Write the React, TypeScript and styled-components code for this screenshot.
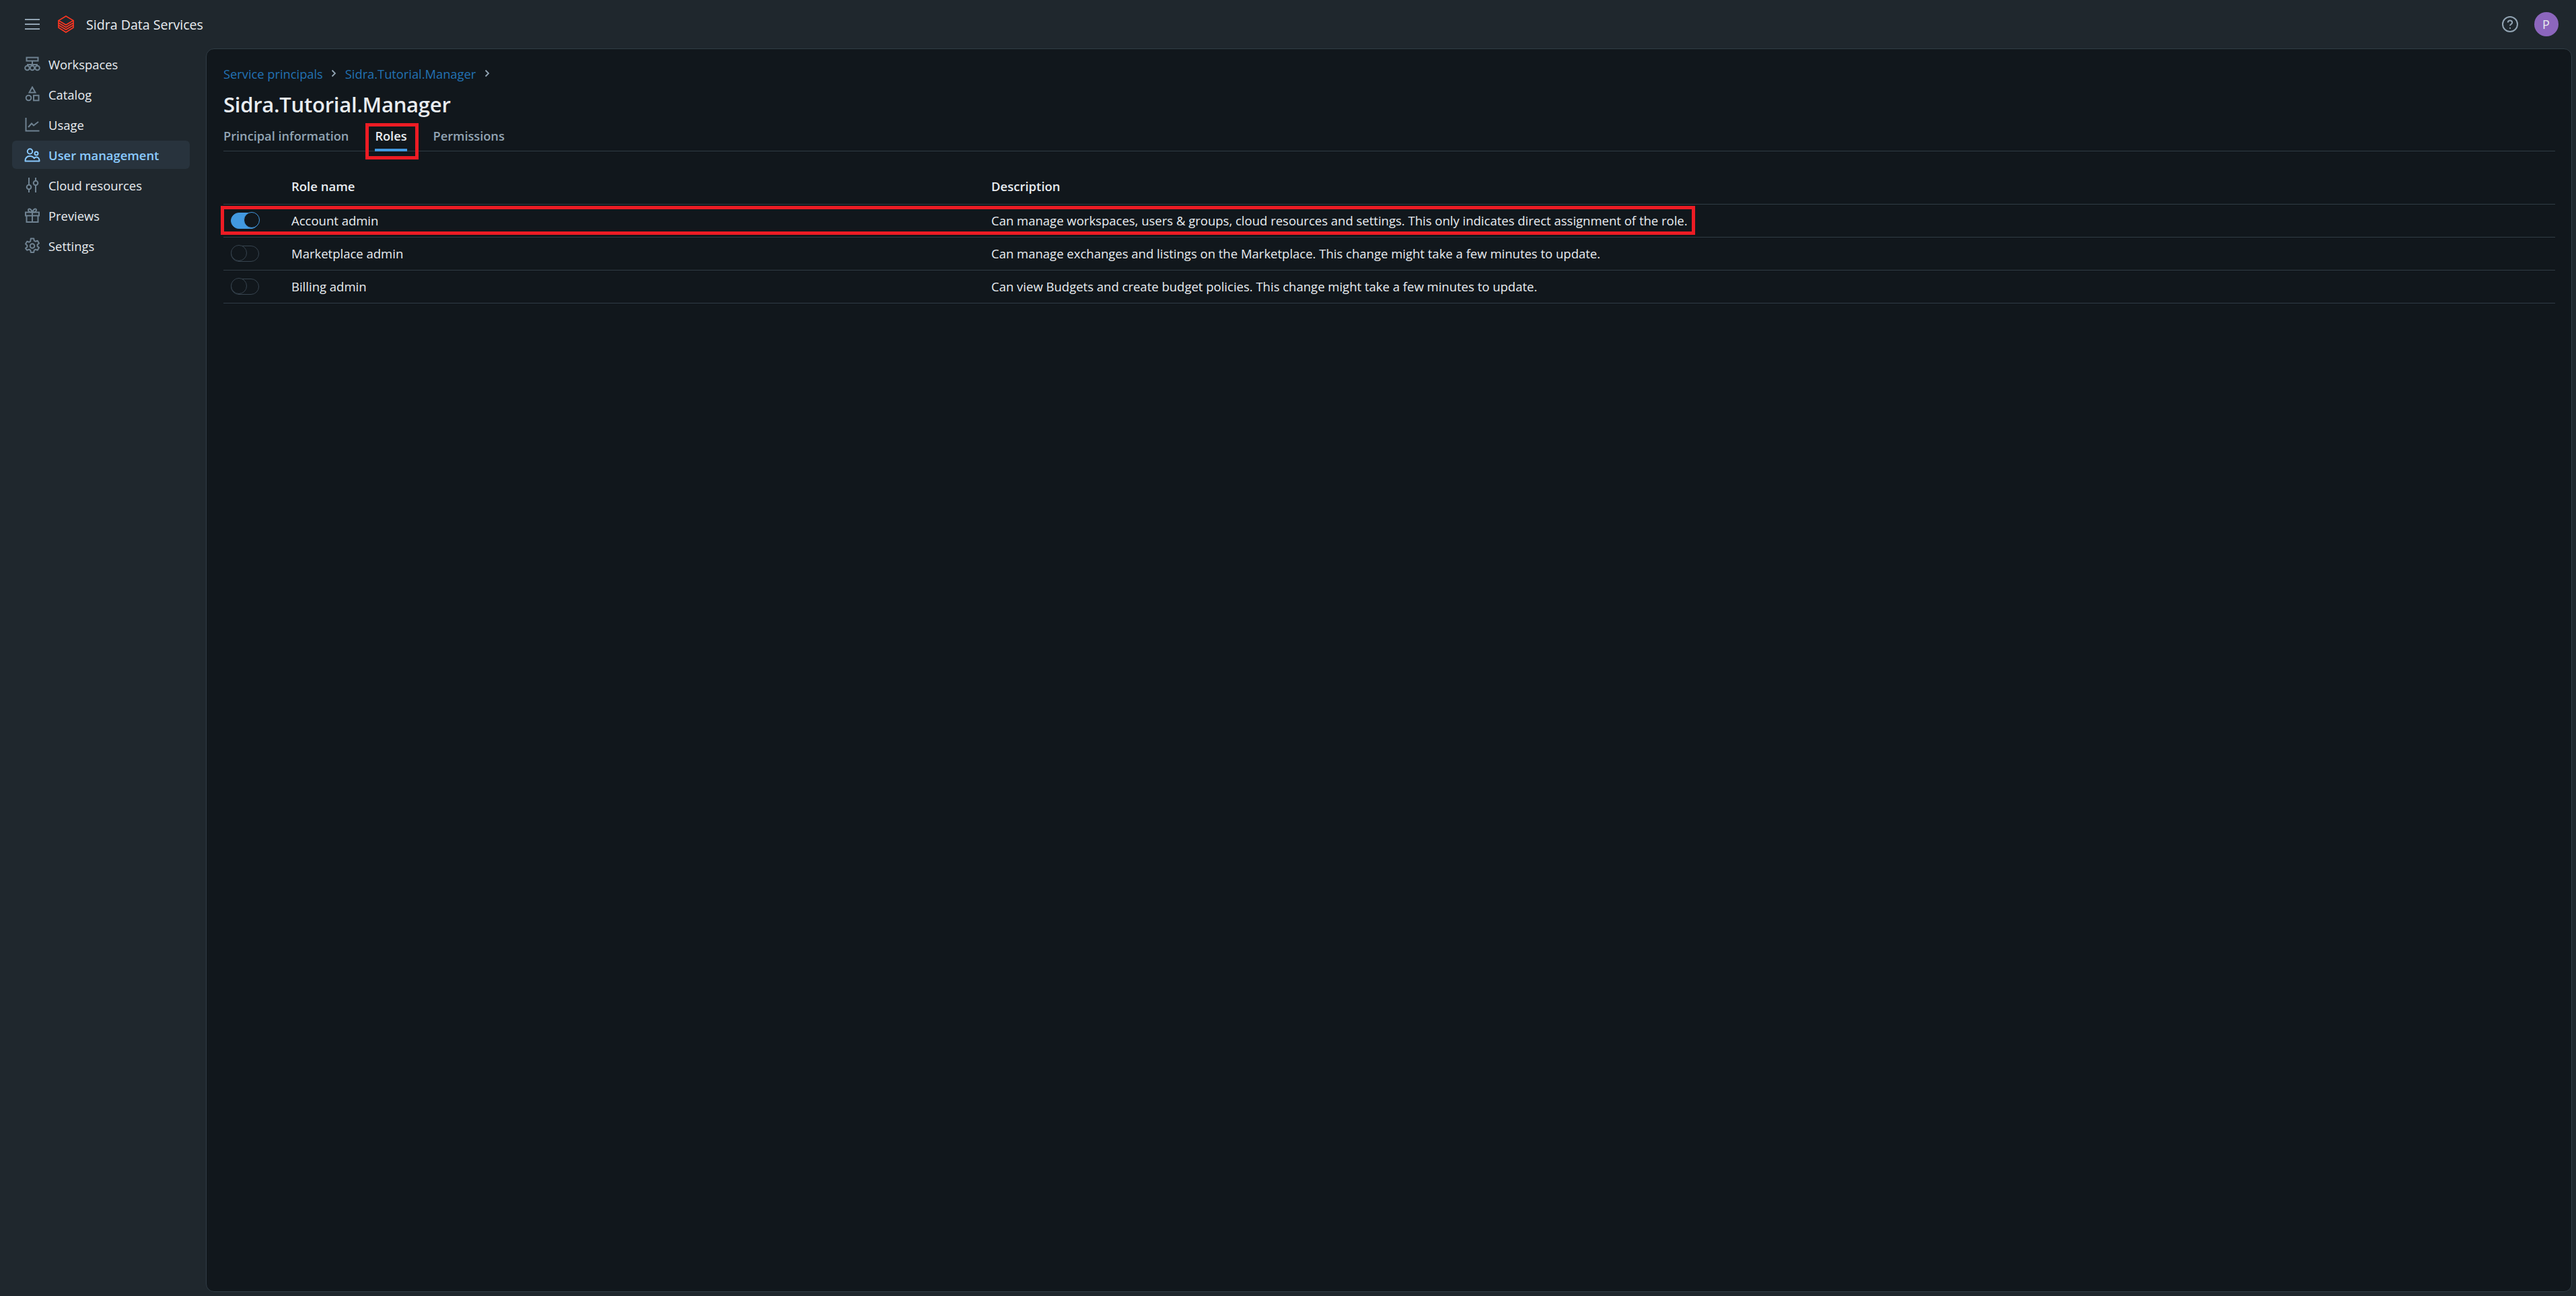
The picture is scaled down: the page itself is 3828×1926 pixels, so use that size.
import React from "react";
import styled, { createGlobalStyle } from "styled-components";

const Global = createGlobalStyle`
  html, body { margin: 0; padding: 0; background: #1f272d; }
  body { font-family: "Open Sans", "Noto Sans", sans-serif; font-size: 18.5px; color: #e8ecf0; }
  * { box-sizing: border-box; }
`;

const Shell = styled.div`
  width: 3828px;
  height: 1926px;
  display: grid;
  grid-template-columns: 306px 1fr;
  grid-template-rows: 72px 1fr;
  padding-right: 6.5px;
  padding-bottom: 6.5px;
  overflow: hidden;
`;

const TopBar = styled.header`
  grid-column: 1 / 3;
  display: flex;
  align-items: center;
  padding: 0 0 0 37px;
`;

const IconSlot = styled.span`
  display: inline-flex;
  align-items: center;
  justify-content: center;
  flex: none;
  color: #92a4b3;
`;

const Brand = styled.span`
  margin-left: 27px;
  display: inline-flex;
`;

const BrandName = styled.span`
  margin-left: 18px;
  font-size: 19.6px;
  color: #e8ecf0;
`;

const TopActions = styled.div`
  margin-left: auto;
  display: flex;
  align-items: center;
  gap: 24px;
  padding-right: 20px;
`;

const Avatar = styled.span`
  width: 36px;
  height: 36px;
  border-radius: 50%;
  background: #8c66bd;
  color: #e8ecf0;
  display: flex;
  align-items: center;
  justify-content: center;
  font-size: 18px;
`;

const Sidebar = styled.nav`
  display: flex;
  flex-direction: column;
  padding: 2px 0 0 18px;
  width: 282px;
`;

const NavItem = styled.a<{ $active?: boolean }>`
  height: 42px;
  margin-bottom: 3px;
  padding: 0 0 0 18px;
  display: flex;
  align-items: center;
  gap: 12px;
  border-radius: 6px;
  font-size: 18.4px;
  color: ${(p) => (p.$active ? "#8acaff" : "#e8ecf0")};
  background: ${(p) => (p.$active ? "#28333d" : "transparent")};
  font-weight: ${(p) => (p.$active ? 600 : 400)};
  & > span { color: ${(p) => (p.$active ? "#8acaff" : "#6f8291")}; }
`;

const Panel = styled.main`
  background: #11171c;
  border: 1.5px solid #303c45;
  border-radius: 12px;
  padding: 22px 24px 0 25px;
`;

const Crumbs = styled.div`
  display: flex;
  align-items: center;
  height: 28px;
  gap: 12.5px;
  font-size: 18.3px;
  color: #2272b4;
`;

const Chevron = styled.span`
  display: inline-flex;
  color: #92a4b3;
`;

const Title = styled.h1`
  margin: 9px 0 0;
  font-size: 31px;
  letter-spacing: -0.25px;
  line-height: 46px;
  font-weight: 600;
  color: #e8ecf0;
`;

const Tabs = styled.div`
  display: flex;
  gap: 39px;
  height: 44px;
  margin-top: 3px;
  border-bottom: 1.5px solid #303c45;
`;

const Tab = styled.div<{ $active?: boolean }>`
  position: relative;
  height: 44px;
  padding-top: 9px;
  font-size: 18.2px;
  font-weight: 600;
  color: ${(p) => (p.$active ? "#e8ecf0" : "#92a4b3")};
  border-bottom: 4px solid ${(p) => (p.$active ? "#4299e0" : "transparent")};
`;

const Callout = styled.span`
  position: absolute;
  border: 5px solid #ed1c24;
  pointer-events: none;
`;

const RolesCallout = styled(Callout)`
  left: -14px;
  right: -17px;
  top: 1.5px;
  bottom: -15.5px;
`;

const RowCallout = styled(Callout)`
  left: -4.5px;
  top: 2px;
  bottom: 3px;
  width: 2191px;
`;

const Table = styled.div`
  margin-top: 29.5px;
`;

const Row = styled.div<{ $head?: boolean }>`
  position: relative;
  display: grid;
  grid-template-columns: 101px 1040px 1fr;
  align-items: center;
  height: ${(p) => (p.$head ? "49.5px" : "49px")};
  border-bottom: 1.5px solid #303c45;
  font-weight: ${(p) => (p.$head ? 600 : 400)};
  padding-bottom: ${(p) => (p.$head ? "4px" : "1px")};
`;

const SwitchCell = styled.div`
  padding-left: 11px;
`;

const SwitchTrack = styled.span<{ $on?: boolean }>`
  position: relative;
  display: block;
  width: 42px;
  height: 24px;
  border-radius: 12px;
  background: ${(p) => (p.$on ? "#4299e0" : "transparent")};
  border: 1.5px solid ${(p) => (p.$on ? "#4299e0" : "#37444f")};
`;

const SwitchThumb = styled.span<{ $on?: boolean }>`
  position: absolute;
  top: -1.5px;
  ${(p) => (p.$on ? "right: -1.5px;" : "left: -1.5px;")}
  width: 24px;
  height: 24px;
  border-radius: 50%;
  background: #11171c;
  border: 1.5px solid ${(p) => (p.$on ? "#4299e0" : "#37444f")};
`;

const s = { fill: "none", stroke: "currentColor", strokeWidth: 2 };

const Menu = () => (
  <svg width="22" height="18" viewBox="0 0 22 18" {...s}>
    <path d="M0 2h22M0 9h22M0 16h22" />
  </svg>
);

const Logo = () => (
  <svg width="24" height="26" viewBox="0 0 24 26" fill="none" stroke="#ff3621" strokeWidth="1.6">
    <path d="M12 1 1 7.500 12 14l11-6.500z" />
    <path d="M1 7.500v3.500l11 6.500L23 11V7.500" />
    <path d="M1 11v3.500L12 21l11-6.500V11" />
    <path d="M1 14.500V18l11 7 11-7v-3.500" />
  </svg>
);

const Workspaces = () => (
  <svg width="24" height="24" viewBox="0 0 24 24" {...s}>
    <path d="M3.500 2.500h17v5h-17zM12 7.500v5.500M5 15.500v-2.500h14v2.500" />
    <circle cx="4.500" cy="18" r="3.300" />
    <circle cx="12" cy="18" r="3.300" />
    <circle cx="19.500" cy="18" r="3.300" />
  </svg>
);

const Catalog = () => (
  <svg width="24" height="24" viewBox="0 0 24 24" {...s}>
    <path d="M12 1.500l4.500 8h-9z" />
    <circle cx="6.500" cy="17.500" r="3.800" />
    <rect x="14" y="13.800" width="7.500" height="7.500" />
  </svg>
);

const Usage = () => (
  <svg width="24" height="24" viewBox="0 0 24 24" {...s}>
    <path d="M2.500 2v19.500h20" />
    <path d="M6 16l5-5.500 3 3 7-5.500" />
  </svg>
);

const Users = () => (
  <svg width="24" height="24" viewBox="0 0 24 24" {...s}>
    <circle cx="8.500" cy="7" r="3.700" />
    <circle cx="18" cy="10" r="2.500" />
    <path d="M1.500 21.500c0-5 3-7.500 7-7.500 3 0 5 1.200 6.300 3.300.8-1.200 2-1.800 3.500-1.800 2.500 0 4.200 2.500 4.200 6z" strokeLinejoin="round" />
  </svg>
);

const Sliders = () => (
  <svg width="24" height="24" viewBox="0 0 24 24" {...s}>
    <path d="M7 1v10.500M7 18.500V23M17 1v4.500M17 12.500V23" />
    <circle cx="7" cy="15" r="3.300" />
    <circle cx="17" cy="9" r="3.300" />
  </svg>
);

const Gift = () => (
  <svg width="24" height="24" viewBox="0 0 24 24" {...s}>
    <path d="M2 7.500h20v5H2zM3.500 12.500V22h17v-9.500M12 7.500V22" />
    <path d="M12 7.500C9 7.500 6 6.500 6 4s4-2.500 6 3.500c2-6 6-6 6-3.500s-3 3.500-6 3.500z" />
  </svg>
);

const Gear = () => (
  <svg width="24" height="24" viewBox="0 0 24 24" {...s}>
    <path d="M9.800 1.500h4.400l.6 3.200 2 1.100 3-1.100 2.200 3.800-2.400 2.100v2.300l2.400 2.100-2.200 3.800-3-1.100-2 1.100-.6 3.200H9.800l-.6-3.200-2-1.100-3 1.100L2 16.100l2.400-2.100v-2.300L2 9.500l2.200-3.800 3 1.100 2-1.100z" strokeLinejoin="round" />
    <circle cx="12" cy="12.500" r="3.300" />
  </svg>
);

const Help = () => (
  <svg width="24" height="24" viewBox="0 0 24 24" {...s}>
    <circle cx="12" cy="12" r="11" />
    <path d="M8.800 9.500c0-4 6.400-4 6.400 0 0 2.500-3.200 2.500-3.200 4.800" />
    <circle cx="12" cy="17.800" r="1.100" fill="currentColor" stroke="none" />
  </svg>
);

const Chev = () => (
  <svg width="8" height="12" viewBox="0 0 8 12" fill="none" stroke="currentColor" strokeWidth="1.800">
    <path d="M1.500 1.500 6 6l-4.500 4.500" />
  </svg>
);

const nav = [
  { label: "Workspaces", icon: <Workspaces /> },
  { label: "Catalog", icon: <Catalog /> },
  { label: "Usage", icon: <Usage /> },
  { label: "User management", icon: <Users />, active: true },
  { label: "Cloud resources", icon: <Sliders /> },
  { label: "Previews", icon: <Gift /> },
  { label: "Settings", icon: <Gear /> },
];

const roles = [
  { name: "Account admin", on: true, text: "Can manage workspaces, users & groups, cloud resources and settings. This only indicates direct assignment of the role." },
  { name: "Marketplace admin", on: false, text: "Can manage exchanges and listings on the Marketplace. This change might take a few minutes to update." },
  { name: "Billing admin", on: false, text: "Can view Budgets and create budget policies. This change might take a few minutes to update." },
];

export default function App() {
  return (
    <Shell>
      <Global />
      <TopBar>
        <IconSlot><Menu /></IconSlot>
        <Brand><Logo /></Brand>
        <BrandName>Sidra Data Services</BrandName>
        <TopActions>
          <IconSlot><Help /></IconSlot>
          <Avatar>P</Avatar>
        </TopActions>
      </TopBar>
      <Sidebar>
        {nav.map((n) => (
          <NavItem key={n.label} $active={n.active}>
            <IconSlot>{n.icon}</IconSlot>
            {n.label}
          </NavItem>
        ))}
      </Sidebar>
      <Panel>
        <Crumbs>
          Service principals
          <Chevron><Chev /></Chevron>
          Sidra.Tutorial.Manager
          <Chevron><Chev /></Chevron>
        </Crumbs>
        <Title>Sidra.Tutorial.Manager</Title>
        <Tabs>
          <Tab>Principal information</Tab>
          <Tab $active>Roles<RolesCallout /></Tab>
          <Tab>Permissions</Tab>
        </Tabs>
        <Table>
          <Row $head>
            <span />
            <span>Role name</span>
            <span>Description</span>
          </Row>
          {roles.map((r) => (
            <Row key={r.name}>
              {r.on && <RowCallout />}
              <SwitchCell>
                <SwitchTrack $on={r.on}><SwitchThumb $on={r.on} /></SwitchTrack>
              </SwitchCell>
              <span>{r.name}</span>
              <span>{r.text}</span>
            </Row>
          ))}
        </Table>
      </Panel>
    </Shell>
  );
}
